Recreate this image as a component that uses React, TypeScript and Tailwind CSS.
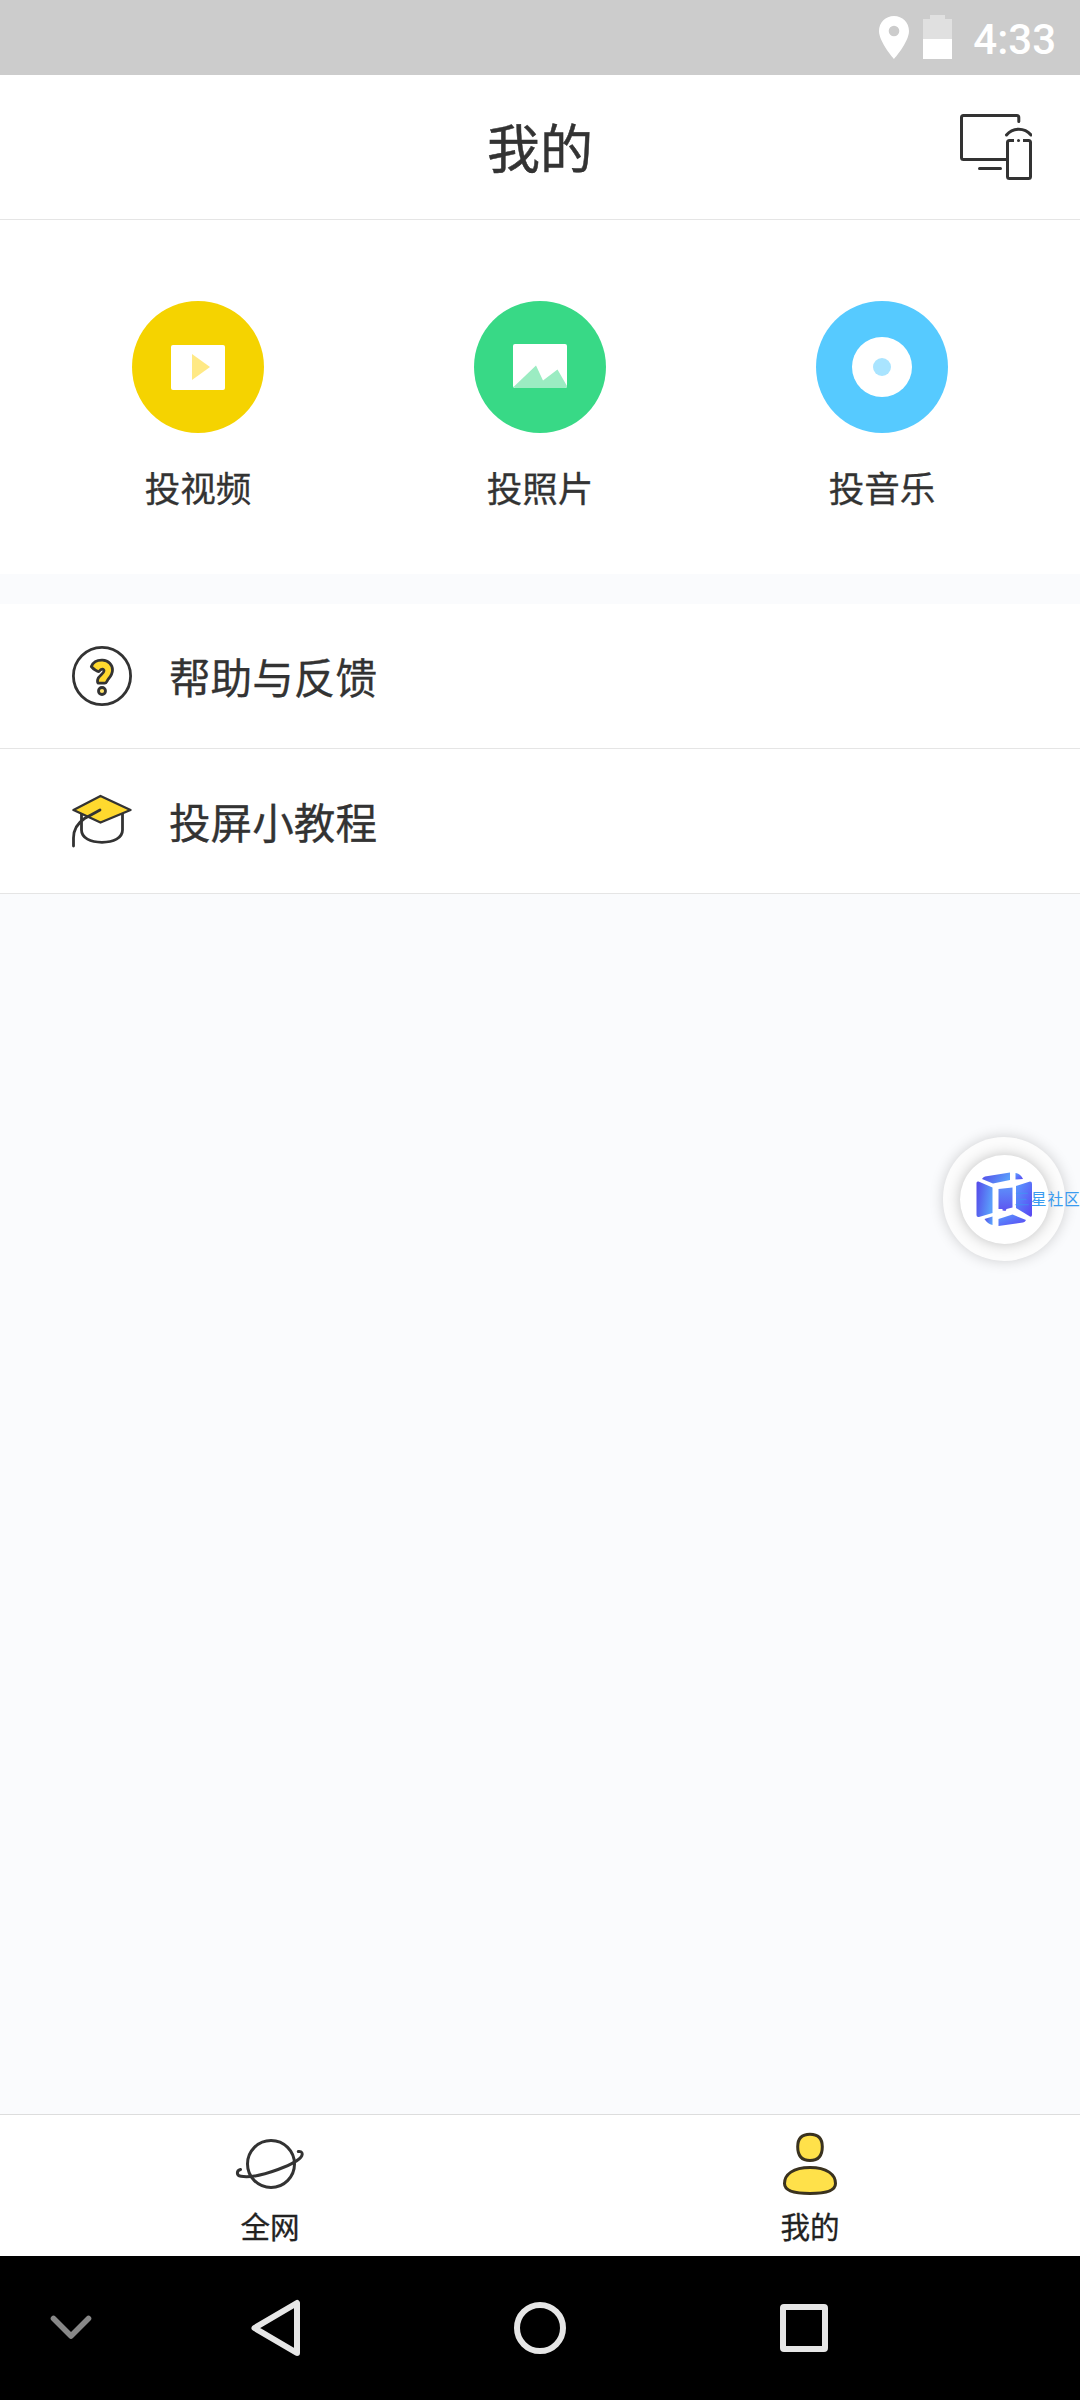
import React from 'react';

const PinIcon = () => (
  <svg className="w-[30px] h-[43px]" viewBox="0 0 30 43" fill="#fff">
    <path
      fillRule="evenodd"
      d="M15 0C6.600 0 0 6.600 0 15c0 11 15 28 15 28s15-17 15-28C30 6.600 23.400 0 15 0zm0 9.700a5.300 5.300 0 1 1 0 10.600a5.300 5.300 0 0 1 0-10.600z"
    />
  </svg>
);

const BatteryIcon = () => (
  <svg className="w-[29px] h-[44px]" viewBox="0 0 29 44">
    <path d="M7 0h15v4h7v20H0V4h7z" fill="#e0e0e0" />
    <path d="M0 24h29v20H0z" fill="#fff" />
  </svg>
);

const CastIcon = () => (
  <svg className="w-[72px] h-[66px]" viewBox="960 114 72 66" fill="none" stroke="#333" strokeWidth="3" strokeLinecap="round" strokeLinejoin="round">
    <path d="M1018.800 121.500V117.500a2 2 0 0 0-2-2H963.500a2 2 0 0 0-2 2V157.500a2 2 0 0 0 2 2H1007" />
    <path d="M979.500 168.500h21" />
    <path d="M1006.500 135a15.800 15.800 0 0 1 24.500 0" />
    <path strokeLinecap="butt" d="M1014 140.500h-4.500a2 2 0 0 0-2 2v34a2 2 0 0 0 2 2h19a2 2 0 0 0 2-2v-34a2 2 0 0 0-2-2H1023" />
    <path d="M1018.500 140.500h.01" />
  </svg>
);

const VideoIcon = () => (
  <svg className="w-[132px] h-[132px]" viewBox="132 301 132 132">
    <circle cx="198" cy="367" r="66" fill="#f5d300" />
    <rect x="171" y="345" width="54" height="45" rx="2" fill="#fff" />
    <path d="M192 354l18 13l-18 13z" fill="#ffe985" />
  </svg>
);

const PhotoIcon = () => (
  <svg className="w-[132px] h-[132px]" viewBox="474 301 132 132">
    <circle cx="540" cy="367" r="66" fill="#38d986" />
    <rect x="513" y="344" width="54" height="44" rx="2" fill="#fff" />
    <path d="M513.500 387L536 365.500L543 380.500L557.500 369.500L567 386a2 2 0 0 1-2 2H515z" fill="#9becc2" />
  </svg>
);

const MusicIcon = () => (
  <svg className="w-[132px] h-[132px]" viewBox="816 301 132 132">
    <circle cx="882" cy="367" r="66" fill="#56caff" />
    <circle cx="882" cy="367" r="30" fill="#fff" />
    <circle cx="882" cy="367" r="9" fill="#a9e4ff" />
  </svg>
);

const HelpIcon = () => (
  <svg className="w-[60px] h-[60px]" viewBox="72 646 60 60" fill="#ffd92e" stroke="#333" strokeWidth="2.800" strokeLinejoin="round">
    <circle cx="102" cy="676" r="28.600" fill="none" />
    <path d="M91.300 666.500C93.500 661.500 98 660 102.500 660.200C108.500 660.500 112.500 664.500 112.500 670C112.500 674.500 110 677 108 679.500C106.800 681.200 106.500 683.200 104.800 683.200H98.700C97.500 683.200 97.300 681.500 97.700 679.500C98.500 675.500 103.800 674 104 671C104.100 668.500 101.200 668.500 99 671.500C97.500 672 93.500 669.200 91.300 666.500z" />
    <circle cx="102" cy="691" r="3.500" fill="#ffe36a" />
  </svg>
);

const TutorialIcon = () => (
  <svg className="w-[60px] h-[60px]" viewBox="72 791 60 60" fill="none" stroke="#333" strokeWidth="2.800" strokeLinecap="round" strokeLinejoin="round">
    <path d="M81.500 814v16c0 8 9 12.300 20.500 12.300S122.500 838 122.500 830v-16" />
    <path d="M100.500 796L130.500 810L100.500 822.500L73.500 810z" fill="#ffd92e" strokeWidth="2.400" />
    <path d="M100 810L84.500 818.500C77 823.500 73.500 829 73.500 838v8" />
  </svg>
);

const PlanetIcon = () => (
  <svg className="w-[72px] h-[68px]" viewBox="234 2130 72 68" fill="none" stroke="#333" strokeWidth="3" strokeLinecap="round">
    <circle cx="271" cy="2164" r="23.500" />
    <path d="M240.500 2169.500C236.500 2170.500 236 2175.500 241 2176.300C250 2178 263 2175 278 2169.500C292 2164.500 302 2158.500 302.200 2154.200C302.300 2151.500 300 2151.300 298.300 2151.500" />
  </svg>
);

const PersonIcon = () => (
  <svg className="w-[72px] h-[68px]" viewBox="774 2130 72 68" fill="#ffe14a" stroke="#3a321f" strokeWidth="3">
    <path d="M810 2134.300c8.500 0 12.300 4.500 12.300 12.500c0 9.500-4.300 13.800-12.300 13.800s-12.300-4.300-12.300-13.800c0-8 3.800-12.500 12.300-12.500z" />
    <path d="M810 2167.500c17 0 25.500 7 25.500 16c0 7-8 10-25.500 10s-25.500-3-25.500-10c0-9 8.500-16 25.500-16z" />
  </svg>
);

const CubeLogo = () => (
  <svg className="w-[56px] h-[54px]" viewBox="976 1173 56 54">
    <defs>
      <linearGradient id="cubeLeft" x1="0" x2="1" y1="0" y2="0.300">
        <stop offset="0" stopColor="#5548e8" />
        <stop offset="1" stopColor="#5a9dfb" />
      </linearGradient>
      <linearGradient id="cubeRight" x1="0" x2="1" y1="0" y2="1">
        <stop offset="0" stopColor="#5b9cff" />
        <stop offset="1" stopColor="#5945f2" />
      </linearGradient>
      <linearGradient id="cubeCore" x1="0" x2="0" y1="0" y2="1">
        <stop offset="0" stopColor="#5d8dfa" />
        <stop offset="1" stopColor="#5e55f0" />
      </linearGradient>
    </defs>
    <g fill="url(#cubeLeft)">
      <path d="M976.500 1184q0-2 2-1.500L992.500 1188.500V1214L979 1218q-2.500 0.500-2.500-2z" />
      <path d="M982 1180q1-2 3-2.500l25-4v7.500l-17 3.500z" />
      <path d="M984.500 1220l8-2.500v8.500q-5-1-8-6z" />
    </g>
    <path d="M998.500 1190l14-1.500v20l-6 1.500-1 2-3-0.500v-1.500h-4z" fill="url(#cubeCore)" />
    <g fill="url(#cubeRight)">
      <path d="M1015.500 1174q5 1 7.500 6l-7.500 0.500z" />
      <path d="M1016 1187l14-4.500q2 0 2 2v31q0 3-2 2l-14-8.500z" />
      <path d="M998.500 1220l14-4.500 13.500 5.500q-1 2-3 2.500l-24.500 3.500z" />
    </g>
  </svg>
);

const actions = [
  { icon: VideoIcon, label: '投视频' },
  { icon: PhotoIcon, label: '投照片' },
  { icon: MusicIcon, label: '投音乐' },
];

const menu = [
  { icon: HelpIcon, label: '帮助与反馈' },
  { icon: TutorialIcon, label: '投屏小教程' },
];

const tabs = [
  { icon: PlanetIcon, label: '全网' },
  { icon: PersonIcon, label: '我的' },
];

const StatusBar = () => (
  <div className="h-[75px] bg-[#ccc] flex items-start justify-end pr-[24px] pt-[15px] text-white">
    <div className="mt-px">
      <PinIcon />
    </div>
    <div className="ml-[14px]">
      <BatteryIcon />
    </div>
    <span className="ml-[21px] mt-[4px] font-[Roboto,sans-serif] font-medium text-[42px] leading-[42px]">4:33</span>
  </div>
);

const FloatingBall = () => (
  <div className="absolute left-[943px] top-[1137px] w-[137px] h-[124px]">
    <div className="w-[122px] h-[124px] rounded-full bg-[#fcfcfc] flex items-center justify-center shadow-[0_0_14px_rgba(0,0,0,0.18)]">
      <div className="w-[89px] h-[89px] rounded-full bg-white flex items-center justify-center shadow-[0_0_14px_rgba(0,0,0,0.24)]">
        <CubeLogo />
      </div>
    </div>
    <div className="absolute left-[71px] top-[50px] whitespace-nowrap text-[15.800px] leading-[24px] tracking-[0.900px] text-[#3a9cf0]">
      <span className="opacity-50">三</span>星社区
    </div>
  </div>
);

const NavBar = () => (
  <div className="h-[144px] bg-black">
    <svg className="w-[1080px] h-[144px]" viewBox="0 2256 1080 144" fill="none" stroke="#e6e6e6" strokeWidth="6" strokeLinecap="round" strokeLinejoin="round">
      <path d="M53.500 2318.500L71 2336L88.500 2318.500" stroke="#888" strokeWidth="5.600" />
      <path d="M254.500 2328L297 2303V2353z" />
      <circle cx="540" cy="2328" r="23" />
      <rect x="783" y="2307" width="42" height="42" rx="1" />
    </svg>
  </div>
);

const App = () => {
  return (
    <div className="relative w-[1080px] h-[2400px] overflow-hidden flex flex-col bg-[#fafbfd] text-[#333] font-['Noto_Sans_CJK_SC',sans-serif]">
      <StatusBar />
      <header className="h-[145px] bg-white border-b border-[#e5e5e5] grid grid-cols-[1fr_auto_1fr] items-center px-[48px]">
        <h1 className="col-start-2 -mt-[2px] text-[53px] leading-[60px] [-webkit-text-stroke:0.5px]">我的</h1>
        <div className="justify-self-end">
          <CastIcon />
        </div>
      </header>

      <section className="h-[354px] bg-white grid grid-cols-3 px-[27px] pt-[81px]">
        {actions.map((item) => (
          <div key={item.label} className="flex flex-col items-center">
            <item.icon />
            <span className="mt-[30px] text-[35.600px] leading-[48px] [-webkit-text-stroke:0.3px]">{item.label}</span>
          </div>
        ))}
      </section>

      <section className="mt-[30px] bg-white">
        {menu.map((item) => (
          <div key={item.label} className="h-[145px] flex items-center pl-[72px] border-b border-[#e5e5e5]">
            <item.icon />
            <span className="-mt-px ml-[37px] text-[41.600px] leading-[60px] [-webkit-text-stroke:0.3px]">{item.label}</span>
          </div>
        ))}
      </section>

      <nav className="mt-auto h-[142px] bg-white border-t border-[#ddd] grid grid-cols-2">
        {tabs.map((tab) => (
          <div key={tab.label} className="flex flex-col items-center pt-[15px] text-[#222]">
            <tab.icon />
            <span className="mt-[8px] text-[29.600px] leading-[40px] [-webkit-text-stroke:0.3px]">{tab.label}</span>
          </div>
        ))}
      </nav>
      <NavBar />
      <FloatingBall />
    </div>
  );
};

export default App;
